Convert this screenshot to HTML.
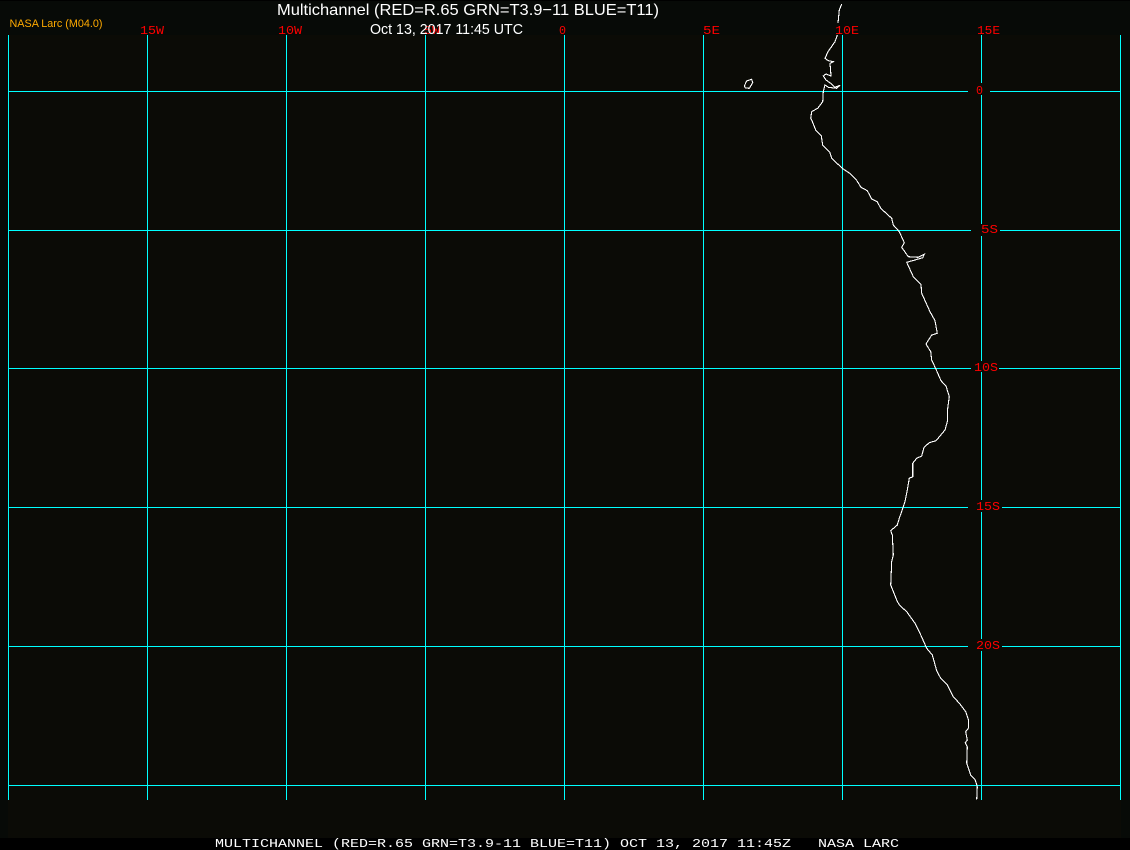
<!DOCTYPE html>
<html>
<head>
<meta charset="utf-8">
<style>
html,body{margin:0;padding:0;background:#0b0b06;width:1130px;height:850px;overflow:hidden}
svg{display:block}
.g{fill:#00ffff;shape-rendering:crispEdges}
.c{fill:none;stroke:#fff;stroke-width:1.1;shape-rendering:crispEdges}
.r{font-family:"Liberation Mono",monospace;font-size:12px;fill:#ff0000}
.t{font-family:"Liberation Sans",sans-serif;fill:#fff}
</style>
</head>
<body>
<svg width="1130" height="850" viewBox="0 0 1130 850" xmlns="http://www.w3.org/2000/svg">
<rect x="0" y="0" width="1130" height="850" fill="#0b0b06"/>
<rect x="0" y="0" width="1130" height="35" fill="#070a07"/>
<rect x="0" y="0" width="8" height="838" fill="#070a07"/>
<rect x="1121" y="0" width="9" height="838" fill="#070a07"/>
<rect x="0" y="0" width="1130" height="1" fill="#000"/>
<rect x="0" y="838" width="1130" height="12" fill="#000"/>

<g class="g">
<rect x="8" y="35" width="1" height="765"/>
<rect x="147" y="35" width="1" height="765"/>
<rect x="286" y="35" width="1" height="765"/>
<rect x="425" y="35" width="1" height="765"/>
<rect x="564" y="35" width="1" height="765"/>
<rect x="703" y="35" width="1" height="765"/>
<rect x="842" y="35" width="1" height="765"/>
<rect x="1120" y="35" width="1" height="765"/>
<rect x="981" y="35" width="1" height="48"/>
<rect x="981" y="95" width="1" height="129"/>
<rect x="981" y="236" width="1" height="125"/>
<rect x="981" y="372" width="1" height="128"/>
<rect x="981" y="512" width="1" height="127"/>
<rect x="981" y="651" width="1" height="149"/>
<rect x="8" y="91" width="960" height="1"/><rect x="990" y="91" width="131" height="1"/>
<rect x="8" y="230" width="963" height="1"/><rect x="1000" y="230" width="121" height="1"/>
<rect x="8" y="368" width="963" height="1"/><rect x="999" y="368" width="122" height="1"/>
<rect x="8" y="507" width="960" height="1"/><rect x="1002" y="507" width="119" height="1"/>
<rect x="8" y="646" width="960" height="1"/><rect x="1002" y="646" width="119" height="1"/>
<rect x="8" y="785" width="1113" height="1"/>
</g>

<polyline class="c" points="841.7,4 839.3,10 838,23"/>
<polyline class="c" points="837.3,35 835,41.7 828,51.7 825,58.3 828.3,60.7 833.3,61.7 830,63.3 831,76 826,74 823.3,76 826,80 831.7,84 835,87.3 840,85.3 836.7,88.3 828.3,87.3 825,85 823.3,91.7 822.7,101.7 818,108 811.7,111.7 810.7,118 811.7,120 816,130.7 821.3,136 822.7,145 830,152.7 831.7,158.3 842.3,168.3 850.7,174 856,179.3 861,187.3 867.3,190.7 871.7,199 877.3,201.7 880.7,208.3 891.7,218.3 893.3,225 899.3,231.7 904.3,242.7 901.7,247.3 908.3,256.7 918.3,257.3 924.3,254.3 922.7,257.7 915,260 906.7,262.3 913.3,276.7 921,284.3 921.7,293.3 930,311.7 935,320.7 937.3,333.3 931.7,335 926,344 930.7,351.7 931.7,360 936,369.3 941,380.7 946,386 949.3,396.7 947.7,408.3 947.3,421.7 945,430 936,440.7 929.3,442.7 924,447.3 921.7,456 916.7,458.3 912.7,463.3 912.7,476.7 909.3,478.3 907.3,490 905,501.7 899.3,518.3 897.3,525 890.7,530.7 892.3,535 893.3,555 891.7,561.7 890.7,585 896.7,600 899.3,605 906.7,611.7 915,623.3 920,633.3 926.7,648.3 932.3,655 936.7,670.7 940.7,678.3 947.3,685 953.3,696.7 960,704 965.7,711.7 968.3,719.3 968.3,728.3 965.7,731.7 967.3,740 965.3,742.7 967.3,746.7 966.7,763.3 970.7,775 975,779.3 977.3,786.7 976.7,799.3"/>
<polygon class="c" points="744.3,86 746.7,81 751.7,79.3 752.7,82.7 749.3,88.3 745.3,88"/>

<text class="r" x="140" y="34" textLength="24" lengthAdjust="spacingAndGlyphs">15W</text>
<text class="r" x="278" y="34" textLength="24" lengthAdjust="spacingAndGlyphs">10W</text>
<text class="r" x="424" y="34" textLength="16" lengthAdjust="spacingAndGlyphs">5W</text>
<text class="r" x="559" y="34" textLength="7" lengthAdjust="spacingAndGlyphs">0</text>
<text class="r" x="703" y="34" textLength="17" lengthAdjust="spacingAndGlyphs">5E</text>
<text class="r" x="835" y="34" textLength="24" lengthAdjust="spacingAndGlyphs">10E</text>
<text class="r" x="977" y="34" textLength="23" lengthAdjust="spacingAndGlyphs">15E</text>
<text class="r" x="976" y="94" textLength="7" lengthAdjust="spacingAndGlyphs">0</text>
<text class="r" x="981" y="233" textLength="17" lengthAdjust="spacingAndGlyphs">5S</text>
<text class="r" x="974" y="371" textLength="24" lengthAdjust="spacingAndGlyphs">10S</text>
<text class="r" x="976" y="510" textLength="24" lengthAdjust="spacingAndGlyphs">15S</text>
<text class="r" x="976" y="649" textLength="24" lengthAdjust="spacingAndGlyphs">20S</text>

<text x="9.5" y="27" font-family="'Liberation Sans',sans-serif" font-size="11" fill="#ffaa00" textLength="93" lengthAdjust="spacingAndGlyphs">NASA Larc (M04.0)</text>
<text class="t" x="277" y="15" font-size="16" textLength="382" lengthAdjust="spacingAndGlyphs">Multichannel (RED=R.65 GRN=T3.9−11 BLUE=T11)</text>
<text class="t" x="370" y="34" font-size="14.5" textLength="153" lengthAdjust="spacingAndGlyphs">Oct 13, 2017 11:45 UTC</text>
<text x="215" y="847" font-family="'Liberation Mono',monospace" font-size="12" fill="#fff" xml:space="preserve" textLength="684" lengthAdjust="spacingAndGlyphs">MULTICHANNEL (RED=R.65 GRN=T3.9-11 BLUE=T11) OCT 13, 2017 11:45Z   NASA LARC</text>
</svg>
</body>
</html>
